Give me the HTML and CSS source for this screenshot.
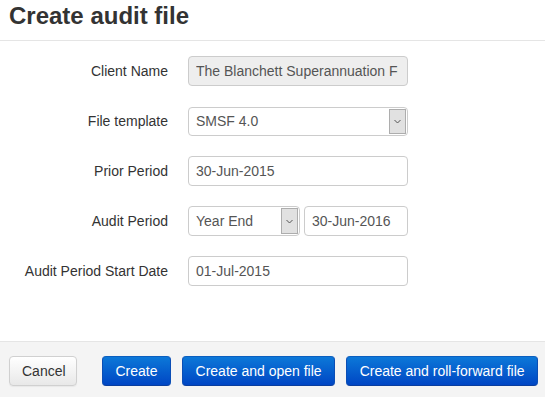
FILE: index.html
```html
<!DOCTYPE html>
<html>
<head>
<meta charset="utf-8">
<link rel="stylesheet" href="styles.css">
</head>
<body>
<div class="modal">
  <div class="modal-header"><h4 class="title">Create audit file</h4></div>
  <div class="modal-body">
    <div class="row">
      <label class="label">Client Name</label>
      <input class="field readonly" type="text" readonly value="The Blanchett Superannuation Fund">
    </div>
    <div class="row">
      <label class="label">File template</label>
      <div class="select wide"><span class="select-text">SMSF 4.0</span><span class="arrow"><svg width="7" height="5" viewBox="0 0 7 5"><path d="M0.5 1 L3.5 4 L6.5 1" fill="none" stroke="#555" stroke-width="1"/></svg></span></div>
    </div>
    <div class="row">
      <label class="label">Prior Period</label>
      <input class="field" type="text" value="30-Jun-2015">
    </div>
    <div class="row">
      <label class="label">Audit Period</label>
      <div class="pair">
        <div class="select narrow"><span class="select-text">Year End</span><span class="arrow"><svg width="7" height="5" viewBox="0 0 7 5"><path d="M0.5 1 L3.5 4 L6.5 1" fill="none" stroke="#555" stroke-width="1"/></svg></span></div>
        <input class="field date" type="text" value="30-Jun-2016">
      </div>
    </div>
    <div class="row">
      <label class="label">Audit Period Start Date</label>
      <input class="field" type="text" value="01-Jul-2015">
    </div>
  </div>
  <div class="modal-footer">
    <button class="btn btn-default cancel">Cancel</button>
    <button class="btn btn-primary">Create</button>
    <button class="btn btn-primary">Create and open file</button>
    <button class="btn btn-primary">Create and roll-forward file</button>
  </div>
</div>
</body>
</html>
```

FILE: styles.css
```css
html, body {
  margin: 0;
  padding: 0;
  background: #fff;
  font-family: "Liberation Sans", Arial, sans-serif;
  font-size: 14px;
  color: #333;
}
.modal {
  width: 545px;
  height: 397px;
  display: flex;
  flex-direction: column;
  overflow: hidden;
}
.modal-header {
  height: 40px;
  border-bottom: 1px solid #e5e5e5;
  padding: 0 9px;
  box-sizing: content-box;
}
.title {
  margin: 0;
  font-size: 24px;
  font-weight: bold;
  line-height: 32px;
  color: #333;
}
.modal-body {
  padding: 15px 0 0 0;
  height: 285px;
  display: flex;
  flex-direction: column;
  gap: 20px;
}
.row {
  display: flex;
  align-items: center;
  height: 30px;
}
.label {
  width: 168px;
  text-align: right;
  margin-right: 20px;
  font-size: 14px;
  color: #333;
}
.field {
  width: 220px;
  height: 30px;
  box-sizing: border-box;
  border: 1px solid #ccc;
  border-radius: 4px;
  padding: 0 7px;
  font-family: "Liberation Sans", Arial, sans-serif;
  font-size: 14px;
  color: #555;
  background: #fff;
  outline: none;
  margin: 0;
}
.field.readonly {
  background: #eee;
  padding-right: 9px;
}
.field.date {
  width: 104px;
}
.pair {
  display: flex;
  gap: 4px;
}
.select {
  height: 29px;
  box-sizing: border-box;
  border: 1px solid #ccc;
  border-radius: 4px;
  display: flex;
  align-items: stretch;
  background: #fff;
  padding: 1px;
}
.select.wide {
  width: 220px;
}
.select.narrow {
  width: 112px;
  height: 30px;
}
.select-text {
  flex: 1;
  display: flex;
  align-items: center;
  padding-left: 6px;
  color: #555;
  font-size: 14px;
}
.arrow {
  width: 17px;
  background: #e1e1e1;
  border: 1px solid #adadad;
  box-sizing: border-box;
  display: flex;
  align-items: center;
  justify-content: center;
}
.modal-footer {
  flex: 1;
  border-top: 1px solid #e5e5e5;
  background: #f4f4f4;
  display: flex;
  align-items: flex-start;
  padding: 14px 0 0 9px;
  gap: 11px;
}
.btn {
  height: 30px;
  box-sizing: border-box;
  padding: 0 12px;
  font-family: "Liberation Sans", Arial, sans-serif;
  font-size: 14px;
  border-radius: 4px;
  border: 1px solid #ccc;
  margin: 0;
  line-height: 28px;
}
.btn-default {
  background: linear-gradient(#ffffff, #e8e8e8);
  color: #333;
  border-color: #d0d0d0;
  box-shadow: 0 1px 1px rgba(0,0,0,0.05);
}
.cancel {
  width: 68px;
  margin-right: 14px;
}
.btn-primary {
  background: linear-gradient(#0c78d8, #0046c4);
  color: #fff;
  border-color: #0b5fbf #0b4eb5 #0a3e9e;
  padding: 0 12.5px;
}
```
